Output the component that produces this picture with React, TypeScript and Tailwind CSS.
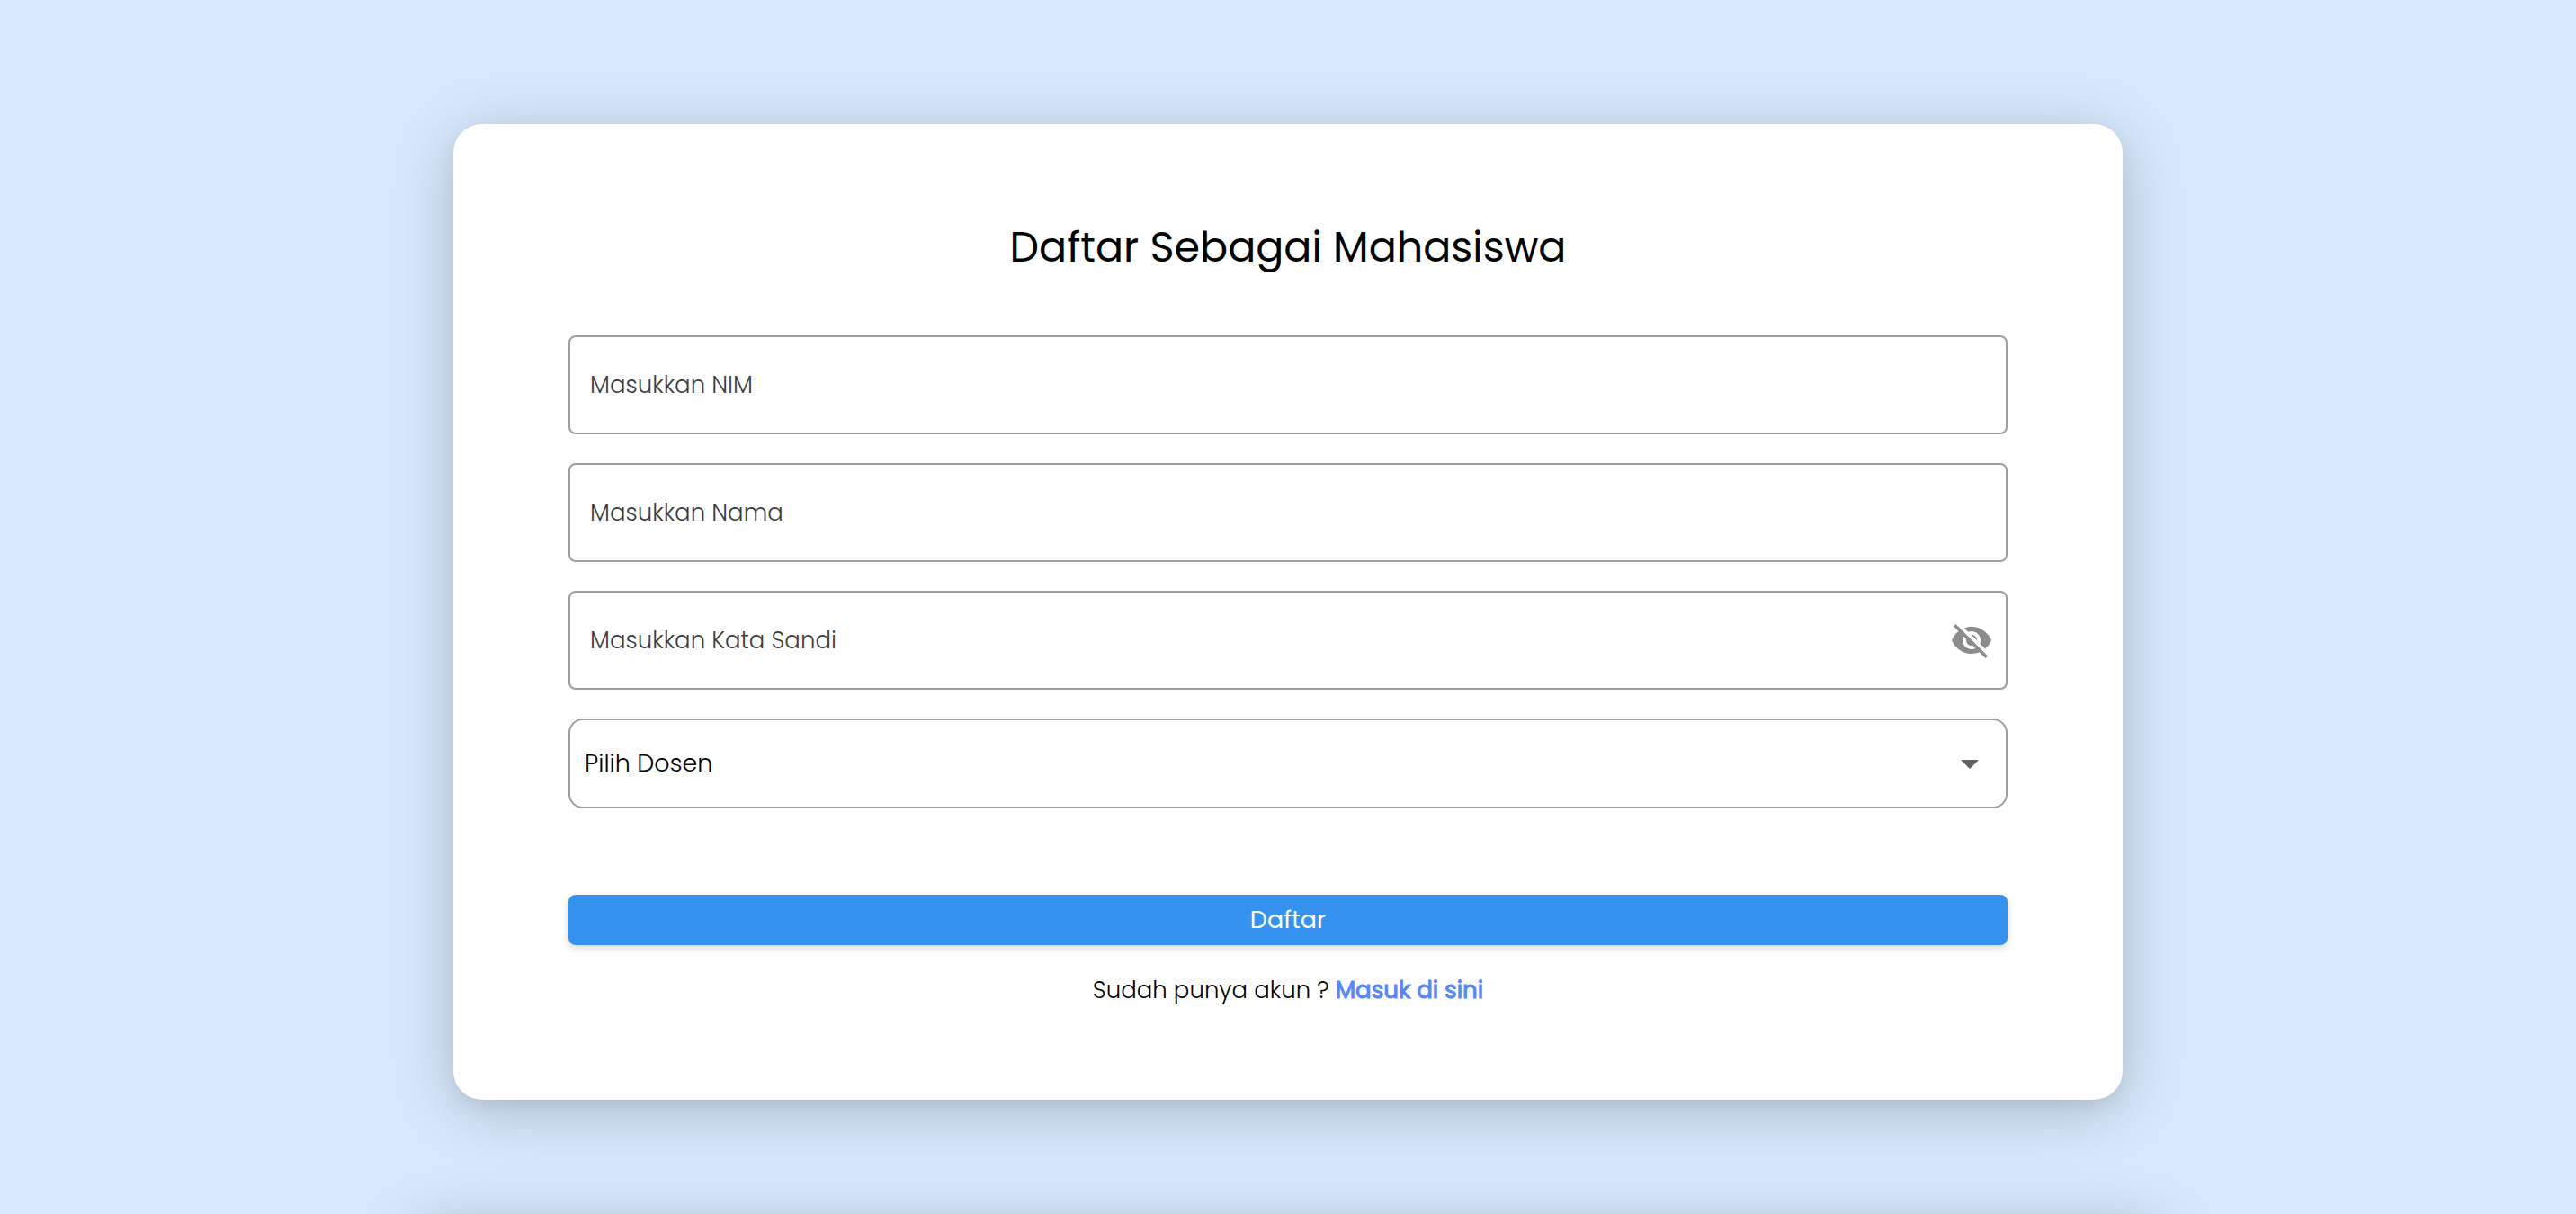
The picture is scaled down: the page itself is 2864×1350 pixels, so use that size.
import { useState } from "react";
import { MdArrowDropDown, MdVisibility, MdVisibilityOff } from "react-icons/md";

const fieldClass =
  "peer block h-[110px] w-full rounded-lg border-2 border-[#9e9e9e] bg-white px-[22px] text-[26px] font-light text-black outline-none";

const labelClass =
  "pointer-events-none absolute inset-y-0 left-6 flex items-center text-[26px] font-light text-[#3c3c3c] peer-[:not(:placeholder-shown)]:invisible";

const cardShadow = "shadow-[0_8px_16px_rgba(0,0,0,0.06),0_12px_72px_rgba(0,0,0,0.2)]";

function TextField({ id, label }: { id: string; label: string }) {
  return (
    <div className="relative">
      <input id={id} type="text" placeholder=" " className={fieldClass} />
      <label htmlFor={id} className={labelClass}>
        {label}
      </label>
    </div>
  );
}

function PasswordField({ id, label }: { id: string; label: string }) {
  const [visible, setVisible] = useState(false);
  return (
    <div className="relative">
      <input id={id} type={visible ? "text" : "password"} placeholder=" " className={fieldClass} />
      <label htmlFor={id} className={labelClass}>
        {label}
      </label>
      <button
        type="button"
        aria-label="Tampilkan kata sandi"
        onClick={() => setVisible(!visible)}
        className="absolute inset-y-0 right-4 flex items-center text-[#8c8c8c]"
      >
        {visible ? <MdVisibility className="size-12" /> : <MdVisibilityOff className="size-12" />}
      </button>
    </div>
  );
}

export default function App() {
  return (
    <div className="h-screen overflow-hidden bg-[#d7e9fd] font-['Poppins','Inter',sans-serif] text-black">
      <main className="px-8 pt-[138px] pb-32">
        <form
          onSubmit={(e) => e.preventDefault()}
          className={`mx-auto max-w-[1856px] rounded-[32px] bg-white px-32 pt-25 pb-25 ${cardShadow}`}
        >
          <h1 className="text-center text-[46px] leading-[74px] font-normal">Daftar Sebagai Mahasiswa</h1>
          <div className="mt-[61px] flex flex-col gap-8">
            <TextField id="nim" label="Masukkan NIM" />
            <TextField id="nama" label="Masukkan Nama" />
            <PasswordField id="sandi" label="Masukkan Kata Sandi" />
            <div className="relative">
              <select
                id="dosen"
                aria-label="Pilih Dosen"
                className="block h-[100px] w-full appearance-none rounded-2xl border-2 border-[#9e9e9e] bg-white px-4 text-[27px] font-light outline-none"
              >
                <option>Pilih Dosen</option>
              </select>
              <MdArrowDropDown className="pointer-events-none absolute inset-y-0 right-[18px] my-auto size-12 text-[#616161]" />
            </div>
          </div>
          <button
            type="submit"
            className="mt-24 flex h-14 w-full items-center justify-center rounded-lg bg-[#3692f1] text-[27px] font-normal text-white shadow-[0_3px_8px_rgba(0,0,0,0.16)]"
          >
            Daftar
          </button>
          <p className="mt-7 text-center text-[26px] leading-11 font-light">
            Sudah punya akun ?{" "}
            <a href="#masuk" className="font-normal text-[#5388fc] [-webkit-text-stroke:1px]">
              Masuk di sini
            </a>
          </p>
        </form>
      </main>
      <footer className={`mx-auto h-40 max-w-[1952px] rounded-[32px] bg-white ${cardShadow}`} />
    </div>
  );
}
